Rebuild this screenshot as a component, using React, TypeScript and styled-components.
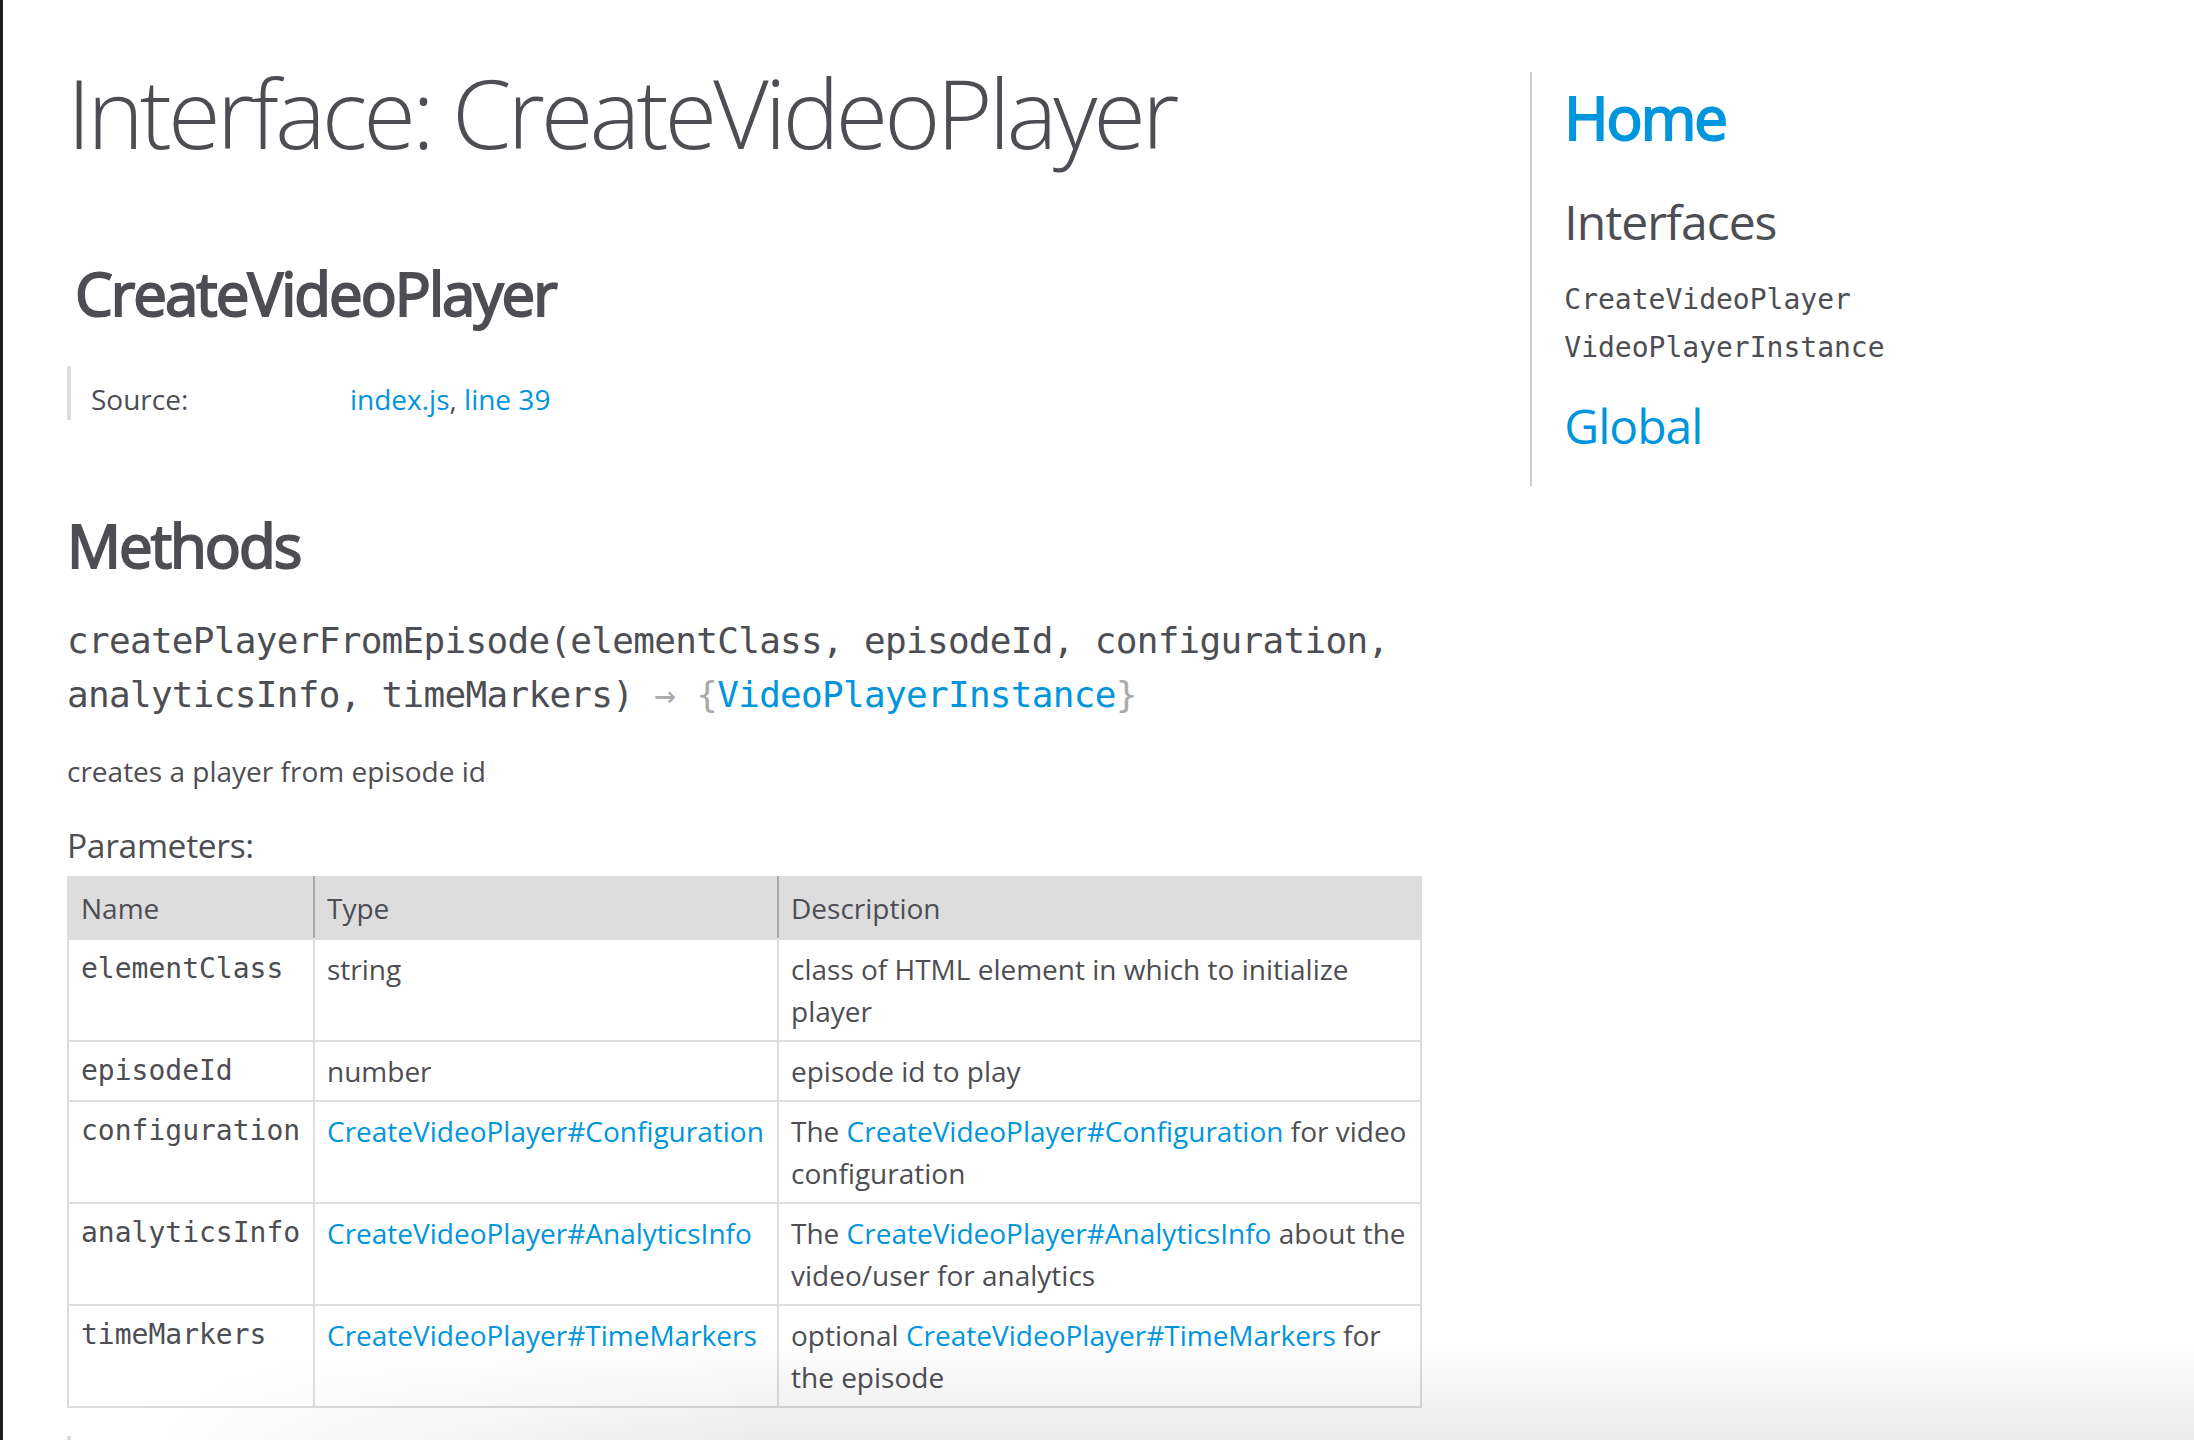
import styled, { createGlobalStyle } from 'styled-components'

const GlobalStyle = createGlobalStyle`
  html, body {
    margin: 0;
    padding: 0;
    background: #fff;
  }
  body {
    font-family: 'Open Sans', 'Liberation Sans', sans-serif;
    font-size: 28px;
    line-height: 1.5;
    color: #4d4e53;
  }
  a, a:visited, a:active {
    color: #0095dd;
    text-decoration: none;
  }
  a:hover {
    text-decoration: underline;
  }
`

const mono = `'DejaVu Sans Mono', 'Liberation Mono', monospace`

// headings in the reference are a synthesized bold over the regular face
const fauxBold = `
  font-weight: 400;
  -webkit-text-stroke: 2px currentColor;
`

const Page = styled.div`
  display: flex;
  align-items: flex-start;
  min-height: 100vh;
  box-sizing: border-box;
  padding: 16px;
  border-left: 3px solid #1f1f1f;
`

const Main = styled.div`
  flex: 0 0 70%;
  min-width: 0;
`

const PageTitle = styled.h1`
  margin: 24px 48px 40px;
  font-size: 96px;
  font-weight: 300;
  letter-spacing: -4px;
  line-height: 1.5;
`

const Section = styled.section`
  padding: 24px 48px;
  margin-right: 60px;
  border-bottom: 2px solid #ccc;
`

const Header = styled.header`
  padding: 0 8px;
`

const BigHeading = styled.h2`
  margin: 0;
  font-size: 60px;
  ${fauxBold}
  letter-spacing: -2px;
  line-height: 90px;
`

const Details = styled.dl`
  display: flex;
  margin: 28px 0 80px;
  border-left: 4px solid #ddd;
`

const DetailLabel = styled.dt`
  box-sizing: border-box;
  width: 279px;
  padding: 12px 0 0 20px;
`

const DetailValue = styled.dd`
  margin: 0;
  padding-top: 12px;
`

const SubsectionTitle = styled.h3`
  margin: 0 0 24px;
  font-size: 60px;
  ${fauxBold}
  letter-spacing: -2px;
  line-height: 90px;
`

const Signature = styled.h4`
  margin: 0 0 24px;
  font-family: ${mono};
  font-size: 36px;
  font-weight: 400;
  letter-spacing: -0.7px;
  line-height: 54px;
`

const TypeSig = styled.span`
  color: #aaa;
`

const Description = styled.div`
  margin: 28px 0;
`

const ParamsTitle = styled.h5`
  margin: 0 0 6px;
  font-size: 33.6px;
  font-weight: 400;
  letter-spacing: -0.34px;
  line-height: 1.5;
`

const Table = styled.table`
  width: 100%;
  border-spacing: 0;
  border-collapse: collapse;
`

const Th = styled.th<{ $w?: number }>`
  width: ${(p) => (p.$w ? `${p.$w}px` : 'auto')};
  padding: 9px 12px;
  background: #ddd;
  border: 2px solid #ddd;
  border-right-color: #aaa;
  font-weight: 400;
  text-align: left;
  vertical-align: top;

  &:last-child {
    border-right-color: #ddd;
  }
`

const Td = styled.td<{ $code?: boolean }>`
  padding: 8px 12px;
  border: 2px solid #ddd;
  text-align: left;
  vertical-align: top;
  font-family: ${(p) => (p.$code ? mono : 'inherit')};
`

const Nav = styled.nav`
  flex: 0 0 30%;
  box-sizing: border-box;
  margin-top: 56px;
  padding-left: 32px;
  border-left: 2px solid #ccc;
`

const NavHome = styled.h2`
  margin: 0 0 24px;
  font-size: 60px;
  ${fauxBold}
  letter-spacing: -2px;
  line-height: 90px;
`

const NavHeading = styled.h3`
  margin: 24px 0;
  font-size: 48px;
  font-weight: 400;
  letter-spacing: -1px;
  line-height: 72px;
`

const NavList = styled.ul`
  margin: 0;
  padding: 0;
  list-style: none;
  font-family: 'DejaVu Sans', 'Liberation Sans', sans-serif;
  line-height: 34px;
`

const NavItem = styled.li`
  margin-top: 12px;
`

const NavLink = styled.a`
  font-family: ${mono};
  line-height: 36px;

  &, &:visited, &:active {
    color: #4d4e53;
  }
`

const BottomShade = styled.div`
  position: fixed;
  left: 0;
  right: 0;
  bottom: 0;
  height: 100px;
  pointer-events: none;
  background: linear-gradient(to bottom, rgba(0, 0, 0, 0) 0%, rgba(0, 0, 0, 0.08) 100%);
  -webkit-mask-image: linear-gradient(to right, transparent 120px, #000 760px);
  mask-image: linear-gradient(to right, transparent 120px, #000 760px);
`

const params = [
  { name: 'elementClass', type: 'string', desc: <>class of HTML element in which to initialize player</> },
  { name: 'episodeId', type: 'number', desc: <>episode id to play</> },
  {
    name: 'configuration',
    type: 'CreateVideoPlayer#Configuration',
    link: true,
    desc: (
      <>
        The <a href="#">CreateVideoPlayer#Configuration</a> for video configuration
      </>
    ),
  },
  {
    name: 'analyticsInfo',
    type: 'CreateVideoPlayer#AnalyticsInfo',
    link: true,
    desc: (
      <>
        The <a href="#">CreateVideoPlayer#AnalyticsInfo</a> about the video/user for analytics
      </>
    ),
  },
  {
    name: 'timeMarkers',
    type: 'CreateVideoPlayer#TimeMarkers',
    link: true,
    desc: (
      <>
        optional <a href="#">CreateVideoPlayer#TimeMarkers</a> for the episode
      </>
    ),
  },
]

export default function App() {
  return (
    <>
      <GlobalStyle />
      <Page>
        <Main>
          <PageTitle>Interface: CreateVideoPlayer</PageTitle>
          <Section>
            <Header>
              <BigHeading>CreateVideoPlayer</BigHeading>
            </Header>
            <article>
              <Details>
                <DetailLabel>Source:</DetailLabel>
                <DetailValue>
                  <a href="#">index.js</a>, <a href="#">line 39</a>
                </DetailValue>
              </Details>

              <SubsectionTitle>Methods</SubsectionTitle>
              <Signature>
                createPlayerFromEpisode(elementClass, episodeId, configuration, analyticsInfo, timeMarkers)
                <TypeSig>
                  {' → {'}
                  <a href="#">VideoPlayerInstance</a>
                  {'}'}
                </TypeSig>
              </Signature>
              <Description>creates a player from episode id</Description>

              <ParamsTitle>Parameters:</ParamsTitle>
              <Table>
                <thead>
                  <tr>
                    <Th $w={220}>Name</Th>
                    <Th $w={438}>Type</Th>
                    <Th>Description</Th>
                  </tr>
                </thead>
                <tbody>
                  {params.map((p) => (
                    <tr key={p.name}>
                      <Td $code>{p.name}</Td>
                      <Td>{p.link ? <a href="#">{p.type}</a> : p.type}</Td>
                      <Td>{p.desc}</Td>
                    </tr>
                  ))}
                </tbody>
              </Table>

              <Details>
                <DetailLabel>Source:</DetailLabel>
                <DetailValue>
                  <a href="#">index.js</a>
                </DetailValue>
              </Details>
            </article>
          </Section>
        </Main>

        <Nav>
          <NavHome>
            <a href="#">Home</a>
          </NavHome>
          <NavHeading>Interfaces</NavHeading>
          <NavList>
            <NavItem>
              <NavLink href="#">CreateVideoPlayer</NavLink>
            </NavItem>
            <NavItem>
              <NavLink href="#">VideoPlayerInstance</NavLink>
            </NavItem>
          </NavList>
          <NavHeading>
            <a href="#">Global</a>
          </NavHeading>
        </Nav>
      </Page>
      <BottomShade />
    </>
  )
}
